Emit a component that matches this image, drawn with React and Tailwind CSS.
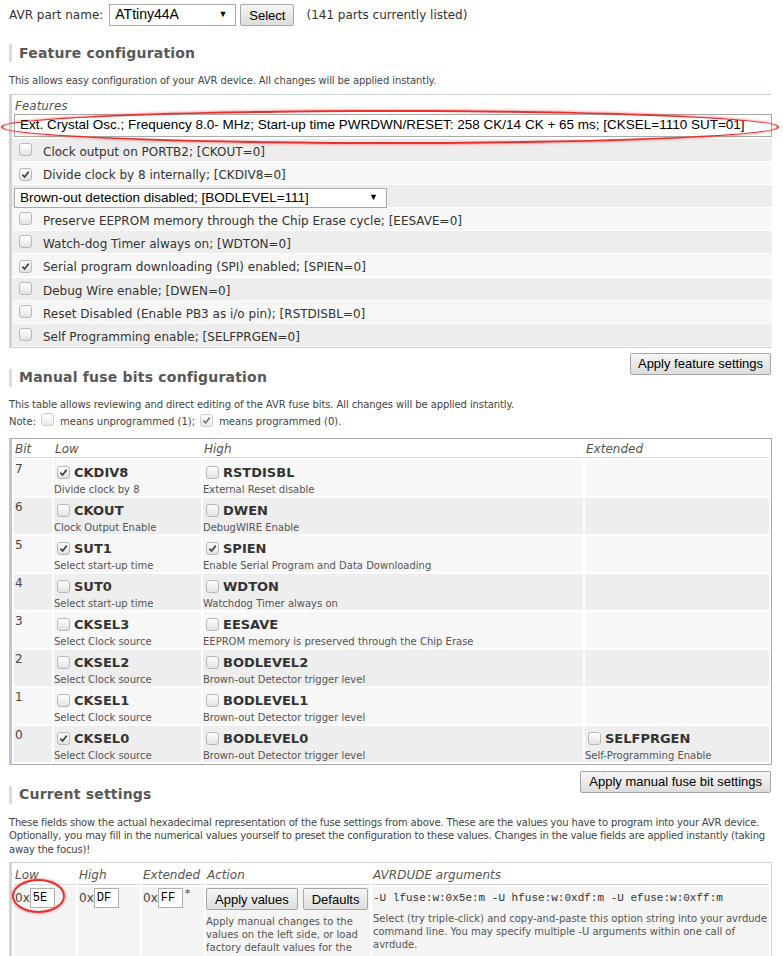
import React from 'react';

const verdana = 'font-[family-name:DejaVu_Sans,Verdana,sans-serif]';
const arial = 'font-[family-name:Liberation_Sans,Arial,sans-serif]';
const mono = 'font-[family-name:Liberation_Mono,monospace]';

function Box({ checked }) {
  return (
    <span className="inline-flex w-[13px] h-[13px] shrink-0 items-center justify-center rounded-[3px] border border-[#b8b8b8] bg-gradient-to-b from-white to-[#e2e2e2]">
      {checked && (
        <svg viewBox="0 0 10 10" className="w-[9px] h-[9px]">
          <path d="M1.5 5.2 L4 7.8 L8.6 1.8" fill="none" stroke="#444" strokeWidth="1.9" />
        </svg>
      )}
    </span>
  );
}

function Btn({ children, className = '' }) {
  return (
    <button
      className={`${arial} h-[22px] px-[7px] whitespace-nowrap text-[13px] text-black rounded-[2px] border border-[#a6a6a6] bg-gradient-to-b from-[#f6f6f6] to-[#dddddd] leading-none ${className}`}
    >
      {children}
    </button>
  );
}

function Heading({ children, className = '' }) {
  return (
    <div className={`flex items-center h-[20px] ${className}`}>
      <span className="w-[3px] h-[18px] bg-[#dcdcdc]" />
      <h2 className={`${verdana} ml-[7px] text-[14px] font-bold text-[#585858] tracking-[0.2px]`}>{children}</h2>
    </div>
  );
}

const features = [
  { t: 'Clock output on PORTB2; [CKOUT=0]' },
  { t: 'Divide clock by 8 internally; [CKDIV8=0]', c: true },
  { sel: 'Brown-out detection disabled; [BODLEVEL=111]' },
  { t: 'Preserve EEPROM memory through the Chip Erase cycle; [EESAVE=0]' },
  { t: 'Watch-dog Timer always on; [WDTON=0]' },
  { t: 'Serial program downloading (SPI) enabled; [SPIEN=0]', c: true },
  { t: 'Debug Wire enable; [DWEN=0]' },
  { t: 'Reset Disabled (Enable PB3 as i/o pin); [RSTDISBL=0]' },
  { t: 'Self Programming enable; [SELFPRGEN=0]' },
];

const fuses = [
  { bit: 7, low: ['CKDIV8', 'Divide clock by 8', true], high: ['RSTDISBL', 'External Reset disable', false] },
  { bit: 6, low: ['CKOUT', 'Clock Output Enable', false], high: ['DWEN', 'DebugWIRE Enable', false] },
  { bit: 5, low: ['SUT1', 'Select start-up time', true], high: ['SPIEN', 'Enable Serial Program and Data Downloading', true] },
  { bit: 4, low: ['SUT0', 'Select start-up time', false], high: ['WDTON', 'Watchdog Timer always on', false] },
  { bit: 3, low: ['CKSEL3', 'Select Clock source', false], high: ['EESAVE', 'EEPROM memory is preserved through the Chip Erase', false] },
  { bit: 2, low: ['CKSEL2', 'Select Clock source', false], high: ['BODLEVEL2', 'Brown-out Detector trigger level', false] },
  { bit: 1, low: ['CKSEL1', 'Select Clock source', false], high: ['BODLEVEL1', 'Brown-out Detector trigger level', false] },
  { bit: 0, low: ['CKSEL0', 'Select Clock source', true], high: ['BODLEVEL0', 'Brown-out Detector trigger level', false], ext: ['SELFPRGEN', 'Self-Programming Enable', false] },
];

function Fuse({ f }) {
  if (!f) return null;
  return (
    <div className="pl-[3px] h-[36px] overflow-hidden">
      <div className="flex items-center gap-[4px] h-[16px] mt-[5px]">
        <Box checked={f[2]} />
        <span className="text-[13px] font-bold text-[#333] leading-[16px]">{f[0]}</span>
      </div>
      <div className="text-[10px] leading-[13px] text-[#555] mt-[2px] -ml-[3px] whitespace-nowrap">{f[1]}</div>
    </div>
  );
}

function Select({ children, className = '', arrow = true }) {
  return (
    <div className={`${arial} flex items-center bg-white border border-[#a9a9a9] text-[13.5px] text-black ${className}`}>
      <span className="pl-[5px] flex-1 whitespace-nowrap overflow-hidden">{children}</span>
      {arrow && <span className="text-[9px] pr-[8px]">▼</span>}
    </div>
  );
}

export default function App() {
  return (
    <div className={`${verdana} relative w-[783px] h-[956px] overflow-hidden bg-white text-[#333] pl-[9px] pr-[11px]`}>
      {/* part selector */}
      <div className="flex items-center h-[28px] pt-[2px] text-[12px]">
        <span className="text-[#333]">AVR part name:</span>
        <Select className="ml-[6px] w-[127px] h-[22px]">
          <span className="text-[14px]">ATtiny44A</span>
        </Select>
        <Btn className="ml-[4px] px-[8px]">Select</Btn>
        <span className="ml-[12px]">(141 parts currently listed)</span>
      </div>

      <Heading className="mt-[15px]">Feature configuration</Heading>
      <p className="mt-[11px] h-[13px] text-[10px] leading-[13px] text-[#444] tracking-[-0.1px]">
        This allows easy configuration of your AVR device. All changes will be applied instantly.
      </p>

      {/* features */}
      <div className="mt-[7px] border-l-[3px] border-t border-b border-[#cdd6d6]">
        <div className="h-[19px] pl-[3px] pt-[2px] text-[12px] italic text-[#555]">Features</div>
        <Select arrow={false} className="ml-[2px] h-[23px] border-[#9a9a9a]">
          Ext. Crystal Osc.; Frequency 8.0- MHz; Start-up time PWRDWN/RESET: 258 CK/14 CK + 65 ms; [CKSEL=1110 SUT=01]
        </Select>
        <div className="flex flex-col gap-[1.1px] mt-[2px] pb-[1px]">
          {features.map((f, i) => (
            <div
              key={i}
              className={`h-[22px] flex items-center text-[12px] ${i % 2 === 0 ? 'bg-[#ededed]' : 'bg-[#f7f7f7]'}`}
            >
              {f.sel ? (
                <Select className="ml-[2px] mt-[3px] w-[373px] h-[20px]">{f.sel}</Select>
              ) : (
                <div className="flex items-center pt-[4px]">
                  <span className="ml-[7px]">
                    <Box checked={f.c} />
                  </span>
                  <span className="ml-[11px] text-[#333]">{f.t}</span>
                </div>
              )}
            </div>
          ))}
        </div>
      </div>

      <div className="flex items-start justify-between mt-[5px]">
        <Heading className="mt-[15px]">Manual fuse bits configuration</Heading>
        <Btn className="mr-[1px]">Apply feature settings</Btn>
      </div>
      <p className="mt-[10px] h-[13px] text-[10px] leading-[13px] text-[#444] tracking-[-0.1px]">
        This table allows reviewing and direct editing of the AVR fuse bits. All changes will be applied instantly.
      </p>
      <div className="mt-[4px] h-[14px] flex items-center text-[10px] text-[#444]">
        <span>Note:</span>
        <span className="ml-[5px] opacity-70">
          <Box />
        </span>
        <span className="ml-[6px]">means unprogrammed (1);</span>
        <span className="ml-[5px] opacity-70">
          <Box checked />
        </span>
        <span className="ml-[6px]">means programmed (0).</span>
      </div>

      {/* fuse table */}
      <table className="mt-[9px] w-[763px] border-separate border-spacing-[2px] border border-[#aaaaaa] border-l-[3px] border-l-[#c2c2dc] text-left">
        <thead>
          <tr className="h-[17px] text-[12px] leading-[16px] italic text-[#555]">
            <th className="w-[38px] font-normal pl-[1px] border-b border-[#d6d6d6] align-top">Bit</th>
            <th className="w-[147px] font-normal pl-[1px] border-b border-[#d6d6d6] align-top">Low</th>
            <th className="w-[380px] font-normal pl-[1px] border-b border-[#d6d6d6] align-top">High</th>
            <th className="font-normal pl-[1px] border-b border-[#d6d6d6] align-top">Extended</th>
          </tr>
        </thead>
        <tbody>
          {fuses.map((r, i) => (
            <tr key={r.bit} className={`h-[36px] align-top ${i % 2 === 0 ? 'bg-[#f7f7f7]' : 'bg-[#eeeeee]'}`}>
              <td className="pl-[1px] pt-[2px] text-[12px] leading-[14px] text-[#444]">{r.bit}</td>
              <td><Fuse f={r.low} /></td>
              <td><Fuse f={r.high} /></td>
              <td><Fuse f={r.ext} /></td>
            </tr>
          ))}
        </tbody>
      </table>

      <div className="flex items-start justify-between mt-[6px]">
        <Heading className="mt-[14px]">Current settings</Heading>
        <Btn className="mr-[1px] px-[8px]">Apply manual fuse bit settings</Btn>
      </div>
      <p className="mt-[11px] text-[10px] leading-[13.5px] text-[#444] tracking-[-0.17px] whitespace-nowrap">
        These fields show the actual hexadecimal representation of the fuse settings from above. These are the values you have to program into your AVR device.
        <br />
        Optionally, you may fill in the numerical values yourself to preset the configuration to these values. Changes in the value fields are applied instantly (taking
        <br />
        away the focus)!
      </p>

      {/* current settings table */}
      <table className="mt-[6px] w-[763px] border-separate border-spacing-[2px] border border-[#cfd6d6] border-l-[3px] text-left">
        <thead>
          <tr className="h-[20px] text-[12px] leading-[16px] italic text-[#555]">
            <th className="w-[62px] font-normal pl-[1px] border-b border-[#d6d6d6]">Low</th>
            <th className="w-[62px] font-normal pl-[1px] border-b border-[#d6d6d6]">High</th>
            <th className="w-[62px] font-normal pl-[1px] border-b border-[#d6d6d6]">Extended</th>
            <th className="w-[164px] font-normal pl-[1px] border-b border-[#d6d6d6]">Action</th>
            <th className="font-normal pl-[1px] border-b border-[#d6d6d6]">AVRDUDE arguments</th>
          </tr>
        </thead>
        <tbody>
          <tr className="align-top bg-[#f4f4f4] h-[70px]">
            {['5E', 'DF', 'FF'].map((v, i) => (
              <td key={v} className="pt-[1px]">
                <div className="flex items-center text-[12px] text-[#444]">
                  <span className="pl-[1px]">0x</span>
                  <span className={`${mono} w-[25px] h-[20px] bg-white border border-[#b0b0b0] flex items-center pl-[2px] text-[12px] text-black`}>{v}</span>
                  {i === 2 && <span className="ml-[2px] self-start text-[11px] leading-[12px]">*</span>}
                </div>
              </td>
            ))}
            <td className="pt-[1px]">
              <div className="flex gap-[5px]">
                <Btn className="h-[21px] px-[8px]">Apply values</Btn>
                <Btn className="h-[21px] px-[8px]">Defaults</Btn>
              </div>
              <p className="mt-[5px] text-[10px] leading-[13px] text-[#555] pr-[4px]">
                Apply manual changes to the values on the left side, or load factory default values for the selected device.
              </p>
            </td>
            <td className="pt-[1px]">
              <div className={`${mono} h-[20px] flex items-center pl-[1px] text-[11px] text-[#333]`}>
                -U lfuse:w:0x5e:m -U hfuse:w:0xdf:m -U efuse:w:0xff:m
              </div>
              <p className="mt-[4px] pl-[1px] text-[10px] leading-[13px] text-[#555]">
                Select (try triple-click) and copy-and-paste this option string into your avrdude command line. You may specify multiple -U arguments within one call of avrdude.
              </p>
            </td>
          </tr>
        </tbody>
      </table>

      {/* red highlight ellipses */}
      <div className="absolute left-[1px] top-[110px] w-[778px] h-[34px] rounded-[50%] border-[2.5px] border-[#e8302f] shadow-[0_0_3px_rgba(232,48,47,0.7)] pointer-events-none" />
      <div className="absolute left-[12px] top-[879px] w-[53px] h-[34px] rounded-[50%] border-[2.5px] border-[#e8302f] shadow-[0_0_3px_rgba(232,48,47,0.7)] pointer-events-none" />
    </div>
  );
}
